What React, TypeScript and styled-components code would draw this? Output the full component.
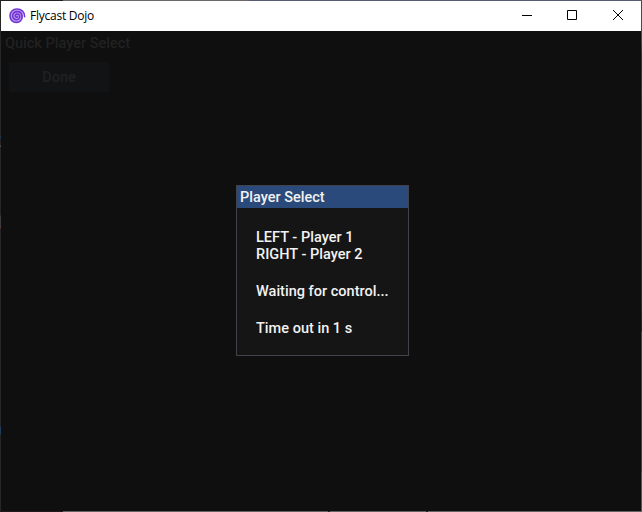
import React from 'react';
import styled, { createGlobalStyle } from 'styled-components';

const GlobalStyle = createGlobalStyle`
  * { box-sizing: border-box; }
  body { margin: 0; background: #0f0f0f; overflow: hidden; }
`;

const Frame = styled.div`
  width: 642px;
  height: 512px;
  display: grid;
  grid-template: 1px 510px 1px / 1px 640px 1px;
`;

const HorizontalEdge = styled.div<{ $fill: string }>`
  grid-column: 1 / -1;
  background: ${(p) => p.$fill};
`;

const VerticalEdge = styled.div<{ $fill: string }>`
  background: ${(p) => p.$fill};
`;

const Window = styled.main`
  display: flex;
  flex-direction: column;
  background: #0f0f0f;
`;

const TitleBar = styled.header`
  height: 30px;
  flex: none;
  display: flex;
  align-items: center;
  background: #fff;
  padding-left: 8px;
`;

const AppTitle = styled.h1`
  flex: 1;
  margin: 0 0 0 4px;
  font: 400 12px/16px "Open Sans", "Noto Sans", sans-serif;
  letter-spacing: -0.24px;
  color: #000;
  white-space: nowrap;
`;

const WindowButton = styled.button<{ $width?: number }>`
  width: ${(p) => p.$width ?? 46}px;
  height: 30px;
  padding: 0 0 2px;
  border: 0;
  background: transparent;
  display: flex;
  align-items: center;
  justify-content: center;
`;

const Client = styled.section`
  flex: 1;
  display: grid;
  font: 500 14.5px/17px Roboto, sans-serif;
`;

const Backdrop = styled.div`
  grid-area: 1 / 1;
  padding: 4px;
  color: #212121;
`;

const Heading = styled.h2`
  margin: 0;
  font: inherit;
`;

const DoneButton = styled.button`
  display: block;
  width: 100px;
  height: 30px;
  margin: 10px 0 0 4px;
  padding: 0;
  border: 0;
  font: inherit;
  color: #212121;
  background: #111315;
`;

const Dialog = styled.div`
  grid-area: 1 / 1;
  justify-self: start;
  align-self: start;
  width: 173px;
  height: 171px;
  margin: 154px 0 0 235px;
  border: 1px solid #42424b;
  background: #151515;
  color: #f2f2f2;
`;

const DialogTitle = styled.div`
  height: 22px;
  padding: 3px;
  background: #294a7a;
`;

const DialogBody = styled.div`
  display: flex;
  flex-direction: column;
  gap: 20px;
  padding: 21px 19px 20px;
  letter-spacing: 0.02px;
`;

const Message = styled.div`
  white-space: pre;
`;

const SpiralIcon = () => (
  <svg width="17" height="16" viewBox="0 0 17 16" fill="none">
    <ellipse cx="7.6" cy="7.7" rx="6.6" ry="6.2" fill="#c09af6" />
    <path
      d="M15.6 8.6C15.9 4 12.2 1 8 1C3.7 1 .9 4.1 1 7.8C1 11.7 3.7 14.5 7.5 14.4C11 14.4 13.2 12 13.1 8.8C13 5.7 11 3.6 8.1 3.6C5.4 3.6 3.6 5.4 3.7 7.9C3.7 10.2 5.4 11.8 7.6 11.7C9.6 11.6 10.8 10.3 10.7 8.6C10.6 7 9.5 6 8.1 6.1C6.8 6.2 6.2 7.1 6.3 8.1C6.5 9.1 7.6 9.5 8.4 8.8"
      stroke="#7136d2"
      strokeWidth="1.6"
      strokeLinecap="round"
    />
  </svg>
);

const WindowGlyph = ({ d }: { d: string }) => (
  <svg width="10" height="10" viewBox="0 0 10 10" fill="none" stroke="#000">
    <path d={d} />
  </svg>
);

const App = () => (
  <>
    <GlobalStyle />
    <Frame>
      <HorizontalEdge $fill="linear-gradient(90deg, #241f24 63px, #6a686a 63px 249px, #535c70 249px)" />
      <VerticalEdge $fill="linear-gradient(#262626 135px, #1e3d5a 136px 137px, #262626 137px 144px, #555 145px 146px, #262626 146px 214px, #3b3b40 215px 225px, #5a4030 226px 227px, #262626 228px 425px, #1d3b5c 426px 433px, #262626 434px)" />
      <Window>
        <TitleBar>
          <SpiralIcon />
          <AppTitle>Flycast Dojo</AppTitle>
          <WindowButton aria-label="Minimize" $width={44}><WindowGlyph d="M0 5.5H10" /></WindowButton>
          <WindowButton aria-label="Maximize"><WindowGlyph d="M.5.5H9.5V9.5H.5Z" /></WindowButton>
          <WindowButton aria-label="Close"><WindowGlyph d="M0 0L10 10M10 0L0 10" /></WindowButton>
        </TitleBar>
        <Client>
          <Backdrop>
            <Heading>Quick Player Select</Heading>
            <DoneButton>Done</DoneButton>
          </Backdrop>
          <Dialog role="dialog">
            <DialogTitle>Player Select</DialogTitle>
            <DialogBody>
              <Message>{'LEFT - Player 1\nRIGHT - Player 2'}</Message>
              <Message>Waiting for control...</Message>
              <Message>Time out in 1 s</Message>
            </DialogBody>
          </Dialog>
        </Client>
      </Window>
      <VerticalEdge $fill="linear-gradient(#4b4b4e 40px, #2c3444 55px, #3b3b40 90px, #28303f 130px, #39322d 210px, #292f40 250px, #333 300px, #222 330px, #3c4454 331px 470px, #555 471px)" />
      <HorizontalEdge $fill="linear-gradient(90deg, #21191f 63px, #646264 63px 328px, #242024 328px 330px, #646264 330px 426px, #242024 426px 428px, #646264 428px)" />
    </Frame>
  </>
);

export default App;
